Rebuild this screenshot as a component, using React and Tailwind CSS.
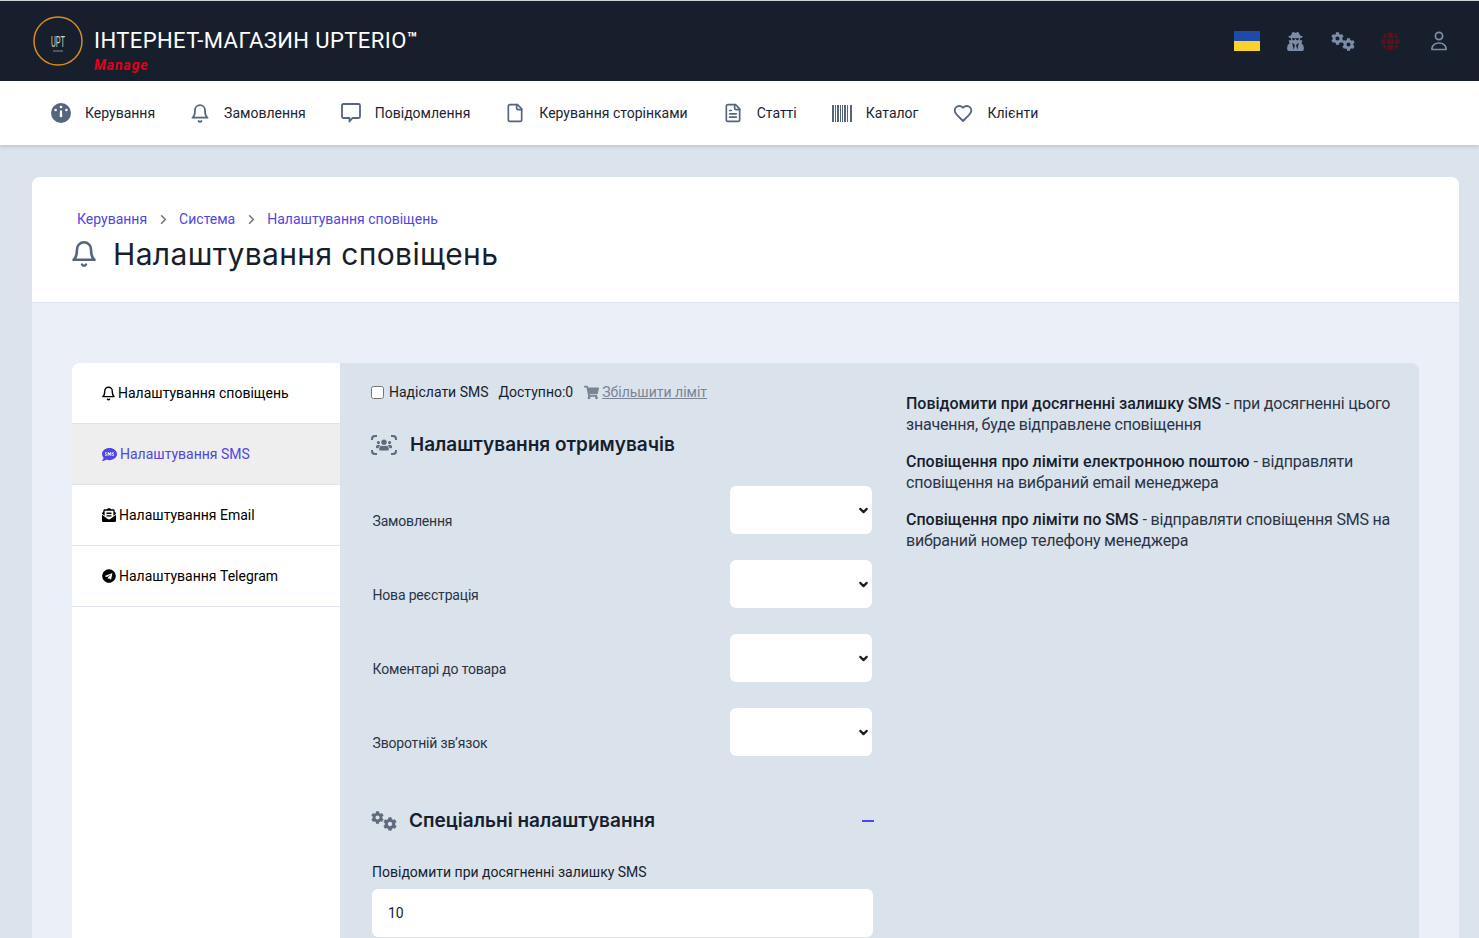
import React from "react";
import { FaUserSecret, FaCog, FaGlobe, FaShoppingCart, FaSms, FaEnvelopeOpenText, FaTelegram, FaUsers } from "react-icons/fa";
import { LuBell, LuFile, LuFileText, LuHeart, LuChevronRight, LuChevronDown } from "react-icons/lu";

const Gauge = () => (
  <svg width="20" height="20" viewBox="0 0 20 20">
    <circle cx="10" cy="10" r="10" fill="#56657e" />
    <circle cx="10" cy="4" r="1.3" fill="#fff" />
    <circle cx="4.6" cy="7" r="1.3" fill="#fff" />
    <circle cx="15.4" cy="7" r="1.3" fill="#fff" />
    <path d="M9 7.5h2l.3 5.5a1.3 1.3 0 1 1-2.6 0z" fill="#fff" />
  </svg>
);

const Message = () => (
  <svg width="20" height="20" viewBox="0 0 20 20" fill="none" stroke="#56657e" strokeWidth="1.8" strokeLinejoin="round">
    <path d="M2.5 1h15a1.5 1.5 0 0 1 1.5 1.5v11a1.5 1.5 0 0 1-1.5 1.5h-6l-3 3.5v-3.5h-6A1.5 1.5 0 0 1 1 13.5v-11A1.5 1.5 0 0 1 2.5 1z" />
  </svg>
);

const Barcode = () => (
  <svg width="20" height="17" viewBox="0 0 20 17" fill="#56657e">
    <rect x="0" width="2" height="17" />
    <rect x="3" width="1" height="17" />
    <rect x="5" width="2" height="17" />
    <rect x="8" width="1" height="17" />
    <rect x="10" width="1" height="17" />
    <rect x="12" width="2" height="17" />
    <rect x="15" width="1" height="17" />
    <rect x="18" width="2" height="17" />
  </svg>
);

const UserIcon = () => (
  <svg width="16" height="20" viewBox="0 0 16 20" fill="none" stroke="#7d8da8" strokeWidth="1.7">
    <circle cx="8" cy="5" r="3.6" />
    <path d="M1 18.5v-1.2C1 14.4 4 12 8 12s7 2.4 7 5.3v1.2z" strokeLinejoin="round" />
  </svg>
);

const menu = [
  { label: "Керування", icon: <Gauge /> },
  { label: "Замовлення", icon: <LuBell size={21} strokeWidth={2.2} /> },
  { label: "Повідомлення", icon: <Message /> },
  { label: "Керування сторінками", icon: <LuFile size={22} strokeWidth={2} /> },
  { label: "Статті", icon: <LuFileText size={22} strokeWidth={2} /> },
  { label: "Каталог", icon: <Barcode /> },
  { label: "Клієнти", icon: <LuHeart size={21} strokeWidth={2.2} /> },
];

const recipients = ["Замовлення", "Нова реєстрація", "Коментарі до товара", "Зворотній зв’язок"];

const Logo = () => (
  <svg width="50" height="50" viewBox="0 0 50 50" className="shrink-0">
    <circle cx="25" cy="25" r="24" fill="none" stroke="#d98a1f" strokeWidth="1.5" />
    <text x="25" y="31" textAnchor="middle" fontSize="14" fill="#d8d2be" fontFamily="Roboto, sans-serif" textLength="14" lengthAdjust="spacingAndGlyphs">UPT</text>
    <line x1="20" y1="35" x2="30" y2="35" stroke="#8b8a80" strokeWidth="1" />
  </svg>
);

const Flag = () => (
  <div className="w-[26px] h-[20px] flex flex-col">
    <div className="h-[10px] bg-[#1e4aa8]" />
    <div className="h-[10px] bg-[#fdd12c]" />
  </div>
);

// two separate gears, upper left and lower right
const Gears = ({ color, a, b, w, h }) => (
  <span className={`relative block ${w} ${h} ${color}`}>
    <FaCog size={a} className="absolute left-0 top-0" />
    <FaCog size={b} className="absolute right-0 bottom-0" />
  </span>
);

const Header = () => (
  <div className="h-[81px] border-t border-t-[#cfd2d6] bg-[#171e2c] flex items-center justify-between pl-[33px] pr-[32px] shrink-0">
    <div className="flex items-center gap-[11px]">
      <Logo />
      <div className="flex flex-col pt-[20px]">
        <div className="text-white text-[22px] leading-[26px] tracking-[0.42px]">
          ІНТЕРНЕТ-МАГАЗИН UPTERIO<span className="text-[17px] leading-[0] font-bold align-[4px]">™</span>
        </div>
        <div className="text-[#e0001b] italic font-bold text-[14px] leading-[18px] tracking-[0.9px] mt-[2px]">Manage</div>
      </div>
    </div>
    <div className="flex items-center">
      <Flag />
      <FaUserSecret size={19} className="text-[#7d8da8] ml-[26px]" />
      <span className="ml-[26px]">
        <Gears color="text-[#7d8da8]" a={13} b={13} w="w-[24px]" h="h-[19px]" />
      </span>
      <FaGlobe size={19} className="text-[#5c1018] ml-[26px]" />
      <span className="ml-[31px]">
        <UserIcon />
      </span>
    </div>
  </div>
);

const Nav = () => (
  <div className="h-[64px] bg-white flex items-center pl-[51px] gap-[35px] shadow-[0_1px_4px_rgba(60,72,90,0.25)] shrink-0 relative">
    {menu.map((m) => (
      <div key={m.label} className="flex items-center gap-[14px] text-[#1c2433] text-[14px]">
        <span className="w-[20px] flex justify-center text-[#56657e]">{m.icon}</span>
        <span>{m.label}</span>
      </div>
    ))}
  </div>
);

const SideItem = ({ icon, label, active, box }) => (
  <div className={`h-[61px] flex items-center gap-[3px] pl-[30px] border-b border-[#dde4ee] text-[14px] ${active ? "bg-[#eeeeee] text-[#4f46e5]" : "bg-white text-black"}`}>
    <span className={`${box} flex justify-center`}>{icon}</span>
    <span>{label}</span>
  </div>
);

const Sidebar = () => (
  <div className="w-[268px] shrink-0 bg-white rounded-tl-lg">
    <SideItem box="w-[13px]" icon={<LuBell size={15} strokeWidth={2.2} className="shrink-0" />} label="Налаштування сповіщень" />
    <SideItem active box="w-[15px]" icon={<FaSms size={15} />} label="Налаштування SMS" />
    <SideItem box="w-[14px]" icon={<FaEnvelopeOpenText size={14} />} label="Налаштування Email" />
    <SideItem box="w-[14px]" icon={<FaTelegram size={14} />} label="Налаштування Telegram" />
  </div>
);

const RecipientRow = ({ label }) => (
  <div className="flex items-center justify-between h-[48px] mb-[26px] pr-[1px]">
    <label className="text-[14px] tracking-[-0.18px] text-[#2b3445] pl-[1.5px] pt-[22px]">{label}</label>
    <div className="relative w-[142px] h-[48px]">
      <select className="w-full h-full appearance-none bg-white rounded-md" />
      <LuChevronDown size={13} strokeWidth={4} className="absolute right-[2px] top-[18px] text-[#171e2c]" />
    </div>
  </div>
);

const Corner = ({ className }) => <span className={`absolute w-[6px] h-[5px] border-[#5f6b7d] ${className}`} />;

const MainForm = () => (
  <div className="w-[502px] shrink-0">
    <div className="flex items-center text-[14px] text-[#171e2c] h-[20px]">
      <input type="checkbox" className="w-[13px] h-[13px] mr-[5px]" />
      <span>Надіслати SMS</span>
      <span className="ml-[10px]">Доступно:0</span>
      <a className="ml-[11px] flex items-center text-[#7a8494] underline">
        <FaShoppingCart size={15} className="text-[#7a8494] mr-[3px]" />
        Збільшити ліміт
      </a>
    </div>
    <div className="flex items-center mt-[31px] mb-[29px] h-[24px]">
      <span className="w-[26px] h-[20px] relative flex items-center justify-center">
        <Corner className="left-0 top-0 border-l-2 border-t-2 rounded-tl-sm" />
        <Corner className="right-0 top-0 border-r-2 border-t-2 rounded-tr-sm" />
        <Corner className="left-0 bottom-0 border-l-2 border-b-2 rounded-bl-sm" />
        <Corner className="right-0 bottom-0 border-r-2 border-b-2 rounded-br-sm" />
        <FaUsers size={16} className="text-[#5f6b7d]" />
      </span>
      <h3 className="ml-[13px] text-[19px] font-semibold text-[#171e2c] font-[Inter,sans-serif]">Налаштування отримувачів</h3>
    </div>
    {recipients.map((r) => (
      <RecipientRow key={r} label={r} />
    ))}
    <div className="flex items-center justify-between mt-[52px] h-[26px]">
      <div className="flex items-center">
        <Gears color="text-[#5f6b7d]" a={13} b={14} w="w-[26px]" h="h-[20px]" />
        <h3 className="ml-[12px] text-[19px] font-semibold text-[#171e2c] font-[Inter,sans-serif]">Спеціальні налаштування</h3>
      </div>
      <span className="w-[12px] h-[2px] bg-[#4f46e5] -mr-[1px]" />
    </div>
    <div className="text-[14px] text-[#171e2c] mt-[28px] ml-[1px] leading-[20px]">Повідомити при досягненні залишку SMS</div>
    <div className="mt-[7px] ml-[1px] h-[48px] bg-white rounded-md flex items-center pl-[16px] text-[14px] text-[#171e2c]">10</div>
  </div>
);

const Help = () => (
  <div className="ml-[33px] w-[490px] text-[16px] leading-[21px] text-[#2b3445] pt-[11px] flex flex-col gap-[16px]">
    <p><b className="font-medium text-[#171e2c]">Повідомити при досягненні залишку SMS</b> <span className="tracking-[-0.2px]">- при досягненні цього значення, буде відправлене сповіщення</span></p>
    <p><b className="font-medium text-[#171e2c]">Сповіщення про ліміти електронною поштою</b> <span className="tracking-[-0.2px]">- відправляти сповіщення на вибраний email менеджера</span></p>
    <p><b className="font-medium text-[#171e2c]">Сповіщення про ліміти по SMS</b> <span className="tracking-[-0.2px]">- відправляти сповіщення SMS на вибраний номер телефону менеджера</span></p>
  </div>
);

export default function App() {
  return (
    <div className="h-[938px] overflow-hidden bg-[#dbe3ed] flex flex-col font-[Roboto,sans-serif]">
      <Header />
      <Nav />
      <div className="mt-[32px] mr-[20px] ml-[32px] bg-[#ebf0f8] rounded-t-lg flex-1 overflow-hidden">
        <div className="h-[126px] bg-white border-b border-[#dde4ee] pl-[45px] pt-[32px]">
          <div className="flex items-center text-[14px] text-[#4f46e5] h-[20px]">
            <span>Керування</span>
            <LuChevronRight size={15} strokeWidth={2.5} className="text-[#6b7280] ml-[9px] mr-[8px]" />
            <span>Система</span>
            <LuChevronRight size={15} strokeWidth={2.5} className="text-[#6b7280] ml-[9px] mr-[8px]" />
            <span>Налаштування сповіщень</span>
          </div>
          <div className="flex items-center mt-[6px] -ml-[7px]">
            <LuBell size={28} strokeWidth={2.2} className="text-[#56657e]" />
            <h1 className="ml-[15px] text-[30px] leading-[38px] tracking-[0.36px] text-[#171e2c] font-[Inter,sans-serif]">Налаштування сповіщень</h1>
          </div>
        </div>
        <div className="mt-[60px] mx-[40px] flex rounded-t-lg overflow-hidden bg-[#dae2ec] h-[600px]">
          <Sidebar />
          <div className="flex pl-[31px] pt-[19px]">
            <MainForm />
            <Help />
          </div>
        </div>
      </div>
    </div>
  );
}
